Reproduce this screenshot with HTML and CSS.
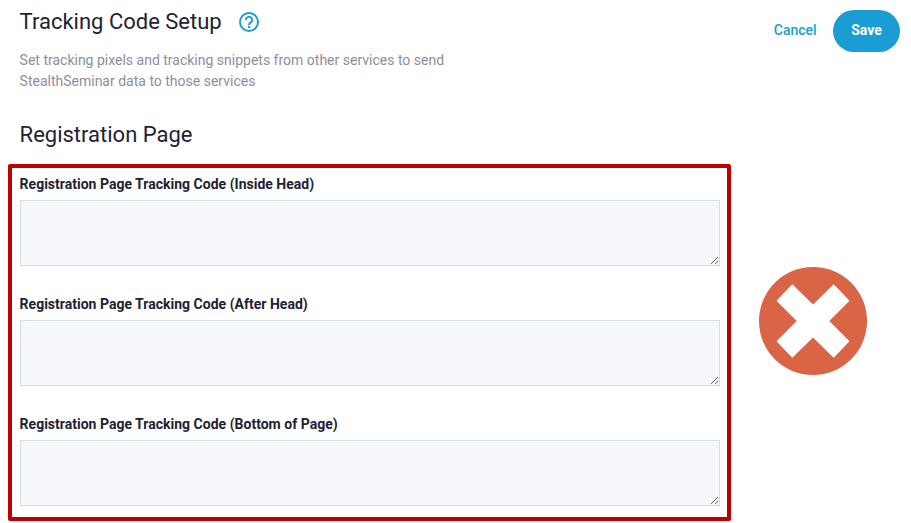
FILE: index.html
```html
<!DOCTYPE html>
<html lang="en">
<head>
<meta charset="utf-8">
<title>Tracking Code Setup</title>
<link rel="stylesheet" href="styles.css">
</head>
<body>
<header class="top">
  <div class="intro">
    <div class="title-row">
      <h1 class="title">Tracking Code Setup</h1>
      <svg class="help" width="22" height="22" viewBox="0 0 22 22" aria-hidden="true">
        <circle cx="11" cy="11" r="9" fill="none" stroke="#1a9dd2" stroke-width="2"/>
        <path d="M7.9 8.9a3.1 3.1 0 1 1 4.9 2.5c-1.2.8-1.8 1.3-1.8 2.6" fill="none" stroke="#1a9dd2" stroke-width="1.9"/>
        <rect x="10" y="15" width="2" height="2" fill="#1a9dd2"/>
      </svg>
    </div>
    <p class="desc">Set tracking pixels and tracking snippets from other services to send<br>StealthSeminar data to those services</p>
  </div>
  <div class="actions">
    <a class="cancel">Cancel</a>
    <button class="save">Save</button>
  </div>
</header>
<h2 class="section">Registration Page</h2>
<main class="content">
  <section class="box">
    <div class="field">
      <label class="label">Registration Page Tracking Code (Inside Head)</label>
      <textarea class="code"></textarea>
    </div>
    <div class="field">
      <label class="label">Registration Page Tracking Code (After Head)</label>
      <textarea class="code"></textarea>
    </div>
    <div class="field">
      <label class="label">Registration Page Tracking Code (Bottom of Page)</label>
      <textarea class="code"></textarea>
    </div>
  </section>
  <svg class="mark" width="108" height="108" viewBox="0 0 108 108" aria-hidden="true">
    <circle cx="54" cy="54" r="54" fill="#d96546"/>
    <polygon fill="#fff" points="33.3,17.3 54,37.5 74.7,17.3 90.5,33.7 70.3,54 90.5,74.3 74.7,90.7 54,70.5 33.3,90.7 17.5,74.3 37.7,54 17.5,33.7"/>
  </svg>
</main>
</body>
</html>
```
FILE: styles.css
```css
* { box-sizing: border-box; }
html, body { margin: 0; padding: 0; background: #fff; overflow: hidden; }
body { width: 911px; height: 523px; font-family: Roboto, "Liberation Sans", sans-serif; color: #1f2233; }
.top { display: flex; justify-content: space-between; align-items: flex-start; padding: 10px 11px 0 19.6px; }
.title-row { display: flex; align-items: center; gap: 16.4px; height: 26px; margin-top: -1px; }
.title { margin: 0; font-size: 22px; font-weight: 400; line-height: 26px; }
.help { display: block; }
.desc { margin: 15px 0 0; font-size: 14px; line-height: 21px; color: #8d8f9b; }
.actions { display: flex; align-items: center; gap: 16.4px; }
.cancel { font-size: 14px; font-weight: 500; color: #1a9dd2; margin-bottom: 2px; }
.save { width: 67px; height: 42px; border: 0; border-radius: 21px; background: #1a9dd2; color: #fff; font: 700 14px Roboto, "Liberation Sans", sans-serif; padding: 0 0 2px; }
.section { margin: 30px 0 0 19.6px; font-size: 22px; font-weight: 400; line-height: 26px; }
.content { display: flex; align-items: flex-start; margin: 16px 0 0 8px; }
.box { width: 723px; height: 357px; border: 4px solid #c00000; border-radius: 2px; padding: 7px 7px 0 7.6px; display: flex; flex-direction: column; gap: 29px; }
.field { display: flex; flex-direction: column; }
.label { display: block; font-size: 14px; font-weight: 700; line-height: 18px; letter-spacing: 0.01px; margin-bottom: 7px; height: 18px; }
.code { display: block; width: 700px; height: 66px; margin: 0 0 0 0.4px; background: #f5f7fb; border: 1px solid #d2dfe6; border-radius: 0; padding: 8px; }
.mark { display: block; margin: 103px 0 0 28px; }
```
